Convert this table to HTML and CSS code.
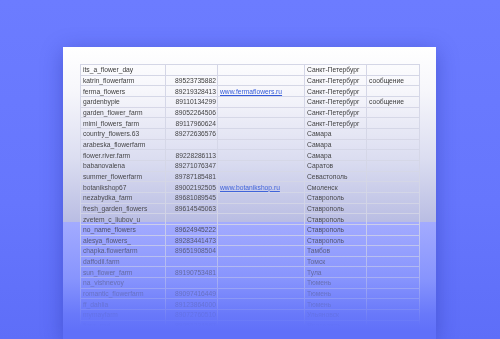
FILE: index.html
```html
<!DOCTYPE html>
<html lang="ru">
<head>
<meta charset="utf-8">
<title>Таблица</title>
<link rel="stylesheet" href="styles.css">
</head>
<body>
<div class="stage">
  <div class="sheet">
    <table class="grid">
      <colgroup><col class="c1"><col class="c2"><col class="c3"><col class="c4"><col class="c5"></colgroup>
      <tbody>
        <tr><td>its_a_flower_day</td><td class="num"></td><td></td><td>Санкт-Петербург</td><td></td></tr>
        <tr><td>katrin_flowerfarm</td><td class="num">89523735882</td><td></td><td>Санкт-Петербург</td><td>сообщение</td></tr>
        <tr><td>ferma_flowers</td><td class="num">89219328413</td><td><a class="lnk">www.fermaflowers.ru</a></td><td>Санкт-Петербург</td><td></td></tr>
        <tr><td>gardenbypie</td><td class="num">89110134299</td><td></td><td>Санкт-Петербург</td><td>сообщение</td></tr>
        <tr><td>garden_flower_farm</td><td class="num">89052264506</td><td></td><td>Санкт-Петербург</td><td></td></tr>
        <tr><td>mimi_flowers_farm</td><td class="num">89117960624</td><td></td><td>Санкт-Петербург</td><td></td></tr>
        <tr><td>country_flowers.63</td><td class="num">89272636576</td><td></td><td>Самара</td><td></td></tr>
        <tr><td>arabeska_flowerfarm</td><td class="num"></td><td></td><td>Самара</td><td></td></tr>
        <tr><td>flower.river.farm</td><td class="num">89228286113</td><td></td><td>Самара</td><td></td></tr>
        <tr><td>babanovalena</td><td class="num">89271076347</td><td></td><td>Саратов</td><td></td></tr>
        <tr><td>summer_flowerfarm</td><td class="num">89787185481</td><td></td><td>Севастополь</td><td></td></tr>
        <tr><td>botanikshop67</td><td class="num">89002192505</td><td><a class="lnk">www.botanikshop.ru</a></td><td>Смоленск</td><td></td></tr>
        <tr><td>nezabydka_farm</td><td class="num">89681089545</td><td></td><td>Ставрополь</td><td></td></tr>
        <tr><td>fresh_garden_flowers</td><td class="num">89614545063</td><td></td><td>Ставрополь</td><td></td></tr>
        <tr><td>zvetem_c_liubov_u</td><td class="num"></td><td></td><td>Ставрополь</td><td></td></tr>
        <tr><td>no_name_flowers</td><td class="num">89624945222</td><td></td><td>Ставрополь</td><td></td></tr>
        <tr><td>alesya_flowers_</td><td class="num">89283441473</td><td></td><td>Ставрополь</td><td></td></tr>
        <tr><td>chapka.flowerfarm</td><td class="num">89651908504</td><td></td><td>Тамбов</td><td></td></tr>
        <tr><td>daffodil.farm</td><td class="num"></td><td></td><td>Томск</td><td></td></tr>
        <tr><td>sun_flower_farm</td><td class="num">89190753481</td><td></td><td>Тула</td><td></td></tr>
        <tr><td>na_vishnevoy</td><td class="num"></td><td></td><td>Тюмень</td><td></td></tr>
        <tr><td>romantic_flowerfarm</td><td class="num">89097416449</td><td></td><td>Тюмень</td><td></td></tr>
        <tr><td>ff_dahlia</td><td class="num">89123864000</td><td></td><td>Тюмень</td><td></td></tr>
        <tr><td>mymayfarm</td><td class="num">89072760510</td><td></td><td>Ульяновск</td><td></td></tr>
        <tr><td>flora_sad</td><td class="num">89051234567</td><td></td><td>Ярославль</td><td></td></tr>
      </tbody>
    </table>
  </div>
</div>
</body>
</html>
```

FILE: styles.css
```css
html, body {
  margin: 0;
  padding: 0;
}
body {
  width: 500px;
  height: 339px;
  overflow: hidden;
  background: linear-gradient(180deg, #6c7cff 0%, #6676fd 60%, #5e6ef8 100%);
  font-family: "Liberation Sans", Arial, sans-serif;
}
.stage {
  padding: 47px 0 0 63px;
}
.sheet {
  position: relative;
  width: 373px;
  height: 292px;
  box-sizing: border-box;
  padding: 17px 0 0 17px;
  background: linear-gradient(180deg,
    #ffffff 0px,
    #f6f6fb 45px,
    #dcdef1 110px,
    #b9bde3 175px,
    #a3abff 175px,
    #8794fd 232px,
    #6878fa 268px,
    #6070f9 285px);
  box-shadow: 0 4px 20px rgba(30, 40, 150, 0.38);
  overflow: hidden;
}
.grid {
  border-collapse: collapse;
  table-layout: fixed;
  width: 339px;
  font-size: 6.7px;
  color: #383838;
  -webkit-mask-image: linear-gradient(180deg,
    #000 0px,
    rgba(0, 0, 0, 0.92) 100px,
    rgba(0, 0, 0, 0.86) 158px,
    rgba(0, 0, 0, 0.76) 170px,
    rgba(0, 0, 0, 0.5) 205px,
    rgba(0, 0, 0, 0.2) 240px,
    rgba(0, 0, 0, 0) 262px);
  mask-image: linear-gradient(180deg,
    #000 0px,
    rgba(0, 0, 0, 0.92) 100px,
    rgba(0, 0, 0, 0.86) 158px,
    rgba(0, 0, 0, 0.76) 170px,
    rgba(0, 0, 0, 0.5) 205px,
    rgba(0, 0, 0, 0.2) 240px,
    rgba(0, 0, 0, 0) 262px);
}
.c1 { width: 85px; }
.c2 { width: 52px; }
.c3 { width: 87px; }
.c4 { width: 62px; }
.c5 { width: 53px; }
.grid td {
  height: 9.67px;
  padding: 0 2px;
  border: 1px solid #d4d6e6;
  line-height: 9px;
  white-space: nowrap;
  overflow: hidden;
}
.grid td.num {
  text-align: right;
  padding-right: 1px;
}
.lnk {
  color: #2f56d8;
  text-decoration: underline;
}
```
